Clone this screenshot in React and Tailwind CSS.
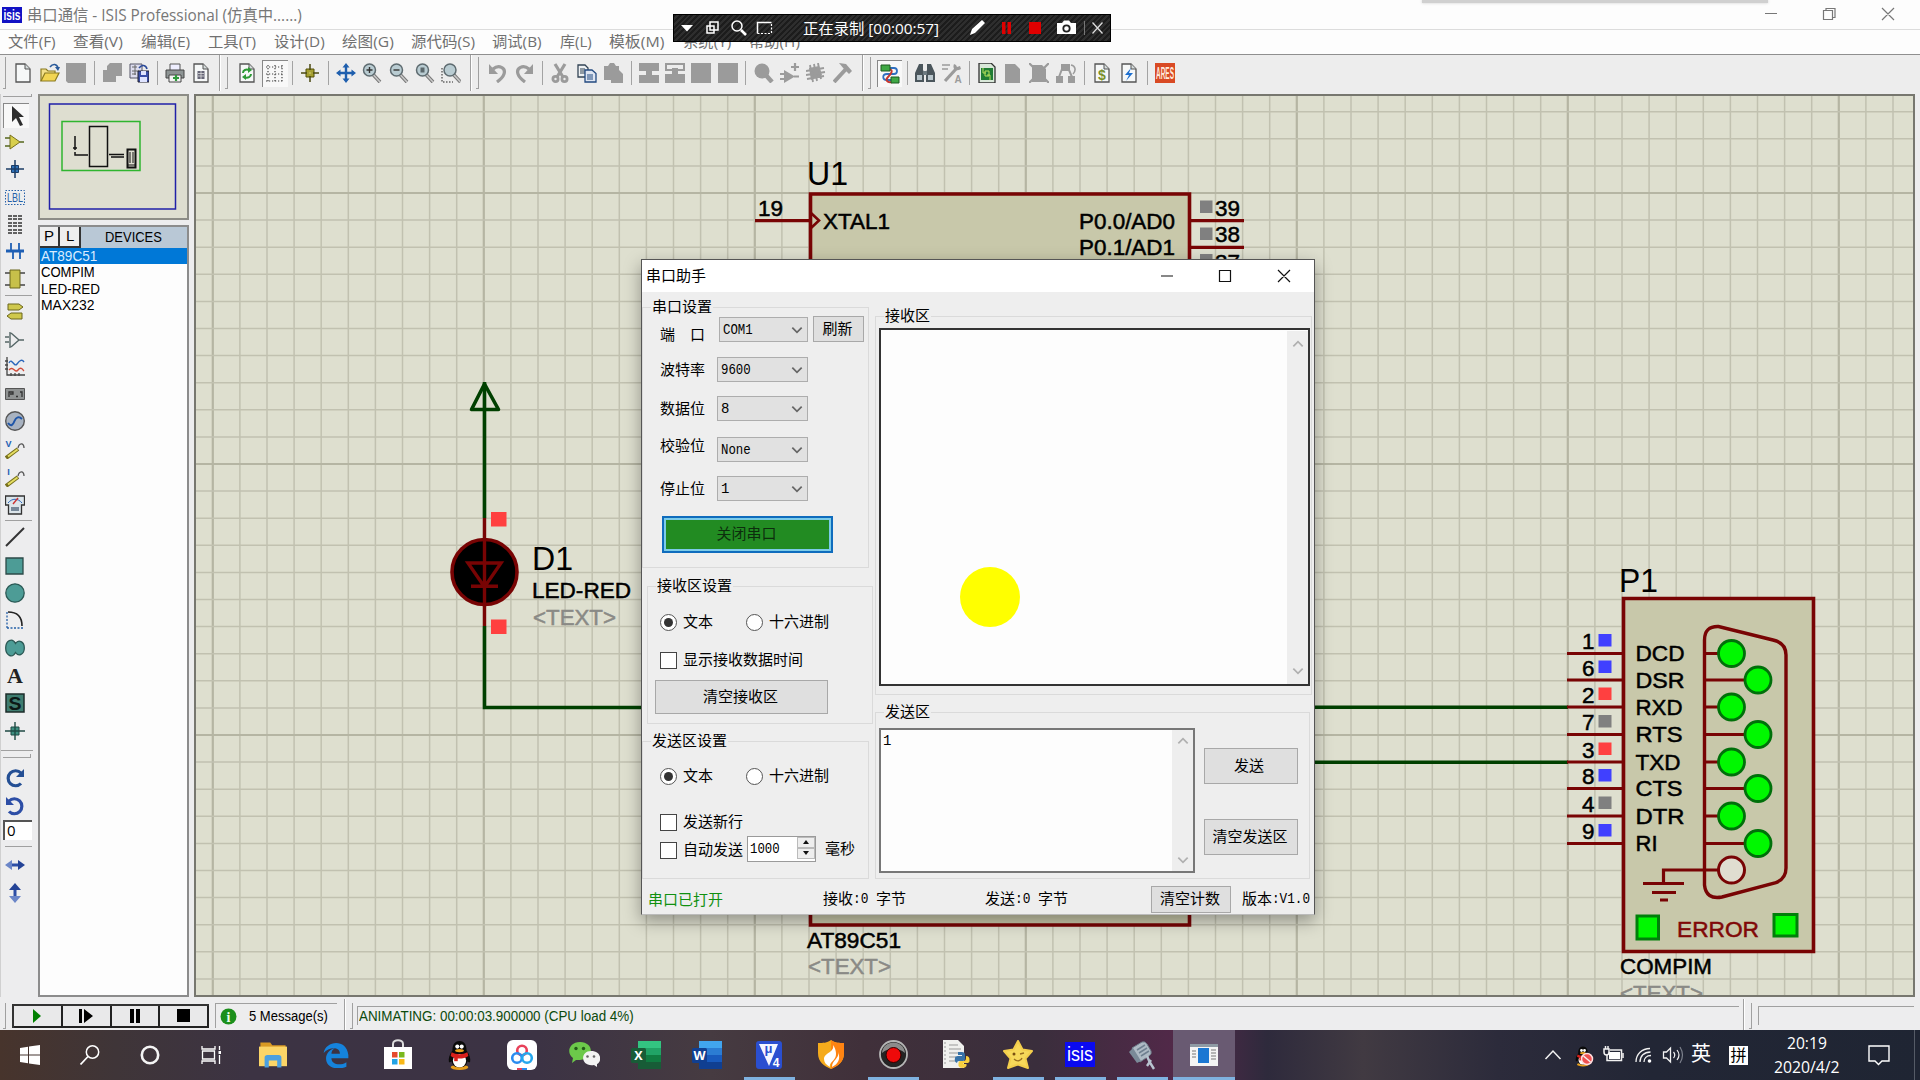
import React, { useLayoutEffect, useRef, useState } from "react";

/* Single line of text, condensed or widened to an exact width. */
function Fit({ w, children, className = "", dy = -1 }) {
  const ref = useRef(null);
  const [k, setK] = useState(1);
  useLayoutEffect(() => {
    const n = ref.current.offsetWidth;
    if (n) setK(w / n);
  }, [w, children]);
  return (
    <span className={"inline-block whitespace-nowrap text-left shrink-0 " + className} style={{ width: w }}>
      <span ref={ref} className="inline-block origin-left whitespace-pre" style={{ transform: `translateY(${dy}px) scaleX(${k})` }}>
        {children}
      </span>
    </span>
  );
}

const S = ({ children, s = 20, h, vb = "0 0 20 20", className = "" }) => (
  <svg width={s} height={h || s} viewBox={vb} fill="none" className={"shrink-0 " + className}>
    {children}
  </svg>
);
/* Lettering inside an icon. */
const L = ({ x, y, s, w, f, children, bold = true }) => (
  <text x={x} y={y} fontSize={s} fill={f} textAnchor="middle" fontWeight={bold ? 700 : 400} textLength={w} lengthAdjust="spacingAndGlyphs"
    className="[font-family:'Liberation_Sans',sans-serif]">{children}</text>
);

/* ---------- toolbar icons ---------- */
const G = "#9b9b9b";
const Page = ({ children }) => (
  <>
    <path d="M3 1h9l5 5v13H3z" fill="#f6f8f8" stroke="#555" strokeWidth="1.3" />
    <path d="M12 1v5h5" fill="#d5dcdc" stroke="#555" />
    {children}
  </>
);
const Lens = ({ children, dx = 0 }) => (
  <g transform={`translate(${dx} 0)`}>
    <path d="M11.5 12l6.5 7" stroke="#777" strokeWidth="3.6" />
    <path d="M11.5 12l6.5 7" stroke="#c9c9c9" strokeWidth="1.6" />
    <circle cx="7.5" cy="7" r="6" fill="#b9ccd2" stroke="#5e6b70" strokeWidth="1.5" />
    {children}
  </g>
);
const icons = {
  new: <Page />,
  open: (
    <>
      <path d="M1 18V6h5l2 2h7v3" fill="#f3e08a" stroke="#8a7a20" strokeWidth="1.2" />
      <path d="M1 18l4-8h14l-4 8z" fill="#f2d552" stroke="#8a7a20" strokeWidth="1.2" />
      <path d="M10 4c3-4 7-3 8 1" stroke="#2a5a9a" strokeWidth="1.6" />
      <path d="M15 4h5l-2 4z" fill="#2a5a9a" />
    </>
  ),
  block: <path d="M0 0h20v20H2l-2-2z" fill={G} />,
  solid: <path d="M0 0h20v20H0z" fill={G} />,
  import: <path d="M1 7h4V3l3-3h12v13h-6v6H1z" fill={G} />,
  export: (
    <>
      <path d="M1 1h12v14H1z" fill="#dde" stroke="#556" />
      <path d="M3 4h5M3 8h7M3 11h4M6 2v10" stroke="#666" />
      <path d="M9 8h11v11H9z" fill="#3b4fa8" stroke="#223" />
      <path d="M12 8h5v4h-5zM11 14h7v5h-7z" fill="#dfe4ff" />
      <path d="M10 5c3-4 7-3 8 1" stroke="#2a4a9a" strokeWidth="1.6" />
    </>
  ),
  print: (
    <>
      <path d="M5 1h10v7H5z" fill="#eef" stroke="#555" />
      <path d="M1 7h18v8H1z" fill="#8d9494" stroke="#444" />
      <path d="M4 12h12v7H4z" fill="#f4f4f4" stroke="#444" />
      <path d="M8 15h6M11 12v6" stroke="#2f9a3b" strokeWidth="2.2" />
    </>
  ),
  area: (
    <>
      <Page />
      <path d="M6.500 8h7v8h-7z" fill="#667" />
      <path d="M7 10.500h6M7 13h6M10 8v8" stroke="#ddd" strokeWidth=".8" />
    </>
  ),
  refresh: (
    <>
      <Page />
      <path d="M6 10c0-3 3-4 6-3M14 11c0 3-3 4-6 3.500" stroke="#2d9a35" strokeWidth="2" />
      <path d="M11 4l4 3-4 3zM9 17l-4-3 4-3z" fill="#2d9a35" />
    </>
  ),
  grid: (
    <g stroke="#222" strokeDasharray="1.2 1.8" strokeWidth="1.2">
      <path d="M1 3h18M1 10h18M1 17h18M3 1v18M10 1v18M17 1v18" strokeOpacity=".85" />
    </g>
  ),
  origin: (
    <>
      <path d="M6 6h8v8H6z" fill="#a5a02d" stroke="#55500a" />
      <path d="M10 1v18M1 10h18" stroke="#4a4810" strokeWidth="1.5" />
      <path d="M10 7v6M7 10h6" stroke="#e9e060" />
    </>
  ),
  pan: (
    <>
      <path d="M10 2v16M2 10h16" stroke="#1f5fae" strokeWidth="2.400" />
      <path d="M10 0l3.500 4.500h-7zM10 20l3.500-4.500h-7zM0 10l4.500-3.500v7zM20 10l-4.500-3.500v7z" fill="#1f5fae" />
    </>
  ),
  zin: <Lens><path d="M7.500 4v6M4.500 7h6" stroke="#333" strokeWidth="1.4" /></Lens>,
  zout: <Lens><path d="M4.500 7h6" stroke="#333" strokeWidth="1.4" /></Lens>,
  zall: <Lens><path d="M5.500 4.500h4v5h-4z" fill="#5b686c" /></Lens>,
  zarea: (
    <>
      <path d="M1 5v14h11" stroke="#222" strokeDasharray="1.500 1.500" />
      <Lens dx={1.5} />
    </>
  ),
  undo: (
    <>
      <path d="M5 6c6-5 13-1 11 5-1 3-3 5-7 8" stroke={G} strokeWidth="3.200" />
      <path d="M1 1v10h9z" fill={G} />
    </>
  ),
  redo: (
    <>
      <path d="M15 6C9 1 2 5 4 11c1 3 3 5 7 8" stroke={G} strokeWidth="3.200" />
      <path d="M19 1v10h-9z" fill={G} />
    </>
  ),
  cut: (
    <>
      <path d="M5 1l8 13M15 1L7 14" stroke={G} strokeWidth="3.200" />
      <circle cx="5.500" cy="16" r="2.600" stroke={G} strokeWidth="2.800" />
      <circle cx="14.500" cy="16" r="2.600" stroke={G} strokeWidth="2.800" />
    </>
  ),
  copy: (
    <>
      <path d="M1 2h7l3 3v9H1z" fill="#eef1f3" stroke="#345" strokeWidth="1.3" />
      <path d="M3 6h5M3 8h5M3 10h5" stroke="#345" />
      <path d="M8 7h7l4 3.500V19H8z" fill="#dfe6f2" stroke="#234a80" strokeWidth="1.3" />
      <path d="M10 12h6M10 14h6M10 16h6" stroke="#234a80" />
    </>
  ),
  paste: <path d="M1 3h4l2-3h4l2 3h3v4l4 4v9H8v-3H1z" fill={G} />,
  b1: <path d="M0 0h20v8h-7v4h7v8H0v-8h7V8H0z" fill={G} />,
  b2: (
    <>
      <path d="M1 1h18v6H1z" stroke={G} strokeWidth="2" />
      <path d="M7 5h6v6h7v9H0v-9h7z" fill={G} />
    </>
  ),
  pick: (
    <>
      <path d="M10 10l8 9" stroke={G} strokeWidth="4.500" />
      <circle cx="8" cy="8" r="7.500" fill={G} />
    </>
  ),
  gate: (
    <>
      <path d="M4 7l11 6.500L4 20z" fill={G} />
      <path d="M0 11h5M0 16h5M14 13.500h5M15 0v8M11 4h8" stroke={G} strokeWidth="2.200" />
    </>
  ),
  pack: (
    <>
      <path d="M3 5l10-2 3 9-11 5z" fill={G} />
      <path d="M4 2l3 17M8 1l3 17M12 0l3 16M0 8l18-3M0 12l19-3M1 16l17-3" stroke={G} strokeWidth="1.900" />
    </>
  ),
  hammer: (
    <>
      <path d="M1 19L13 6" stroke={G} strokeWidth="4" />
      <path d="M6 0l7 1 6 7-3 3-5-5z" fill={G} />
    </>
  ),
  wire: (
    <>
      <path d="M8 4h6c4 0 4 6 0 6H7c-5 0-5 6 0 6h5" stroke="#2f6fc0" strokeWidth="1.800" />
      <path d="M9 5c5 1 2 5-1 8s-1 6 4 5" stroke="#c7362d" strokeWidth="2" />
      <path d="M1 1h9v6H1zM11 13h8v6h-8z" fill="#3fa845" stroke="#1c5b20" />
    </>
  ),
  bin: (
    <>
      <path d="M4 1h4v6l1 2v10H0v-9zM16 1h-4v6l-1 2v10h9v-9z" fill="#4b565c" />
      <path d="M8 8h4v4H8z" fill="#6d7a80" />
      <path d="M2 12h5v5H2zM13 12h5v5h-5z" fill="#b9c6cc" />
    </>
  ),
  tool: (
    <>
      <path d="M3 18L14 6" stroke={G} strokeWidth="3.200" />
      <path d="M12 1c-2 5 2 8 7 5l-1-3-3 1-1-2z" fill={G} />
      <path d="M0 2h8M0 6h6" stroke={G} strokeWidth="1.600" />
      <L x={16} y={20} s={10} f={G}>A</L>
    </>
  ),
  design: (
    <>
      <path d="M2 0h12l4 4v16H2z" fill="#d9e8d9" stroke="#333" strokeWidth="1.300" />
      <path d="M4 5h12v12H4z" fill="#207c34" />
      <path d="M6 5v5h3M13 17v-5h-3M8 8h4v5H8z" stroke="#b7e05a" />
    </>
  ),
  sheet: <path d="M2 1h10l5 5v14H2z" fill={G} />,
  remove: (
    <>
      <path d="M3 2h10l4 4v13H3z" fill={G} />
      <path d="M0 0l20 20M20 0L0 20" stroke={G} strokeWidth="2.200" />
    </>
  ),
  exit: (
    <>
      <path d="M5 1h9v7H5z" fill={G} />
      <path d="M6 6L3 14M13 7l3 7" stroke={G} strokeWidth="2" />
      <path d="M0 13h7v7H0zM12 13h7v7h-7z" fill={G} />
      <path d="M15 2c5 1 5 6 2 9" stroke={G} strokeWidth="1.600" />
    </>
  ),
  dollar: <Page><L x={10} y={17} s={14} f="#79902b">$</L></Page>,
  bolt: <Page><path d="M12 5l-6 7h4l-3 6 7-8h-4z" fill="#1d6fd0" /></Page>,
  ares: (
    <>
      <path d="M0 0h20v20H0z" fill="#d94a24" />
      <L x={10} y={16} s={16} w={18} f="#ffe9dc">ARES</L>
    </>
  ),
};

const toolbar = [
  ["grip", 9], ["new", 27], ["open", 27], ["block", 26], ["sep", 10], ["import", 26], ["export", 27], ["sep", 10],
  ["print", 26], ["area", 26], ["end", 19], ["refresh", 28], ["grid", 27, 1], ["sep", 9], ["origin", 26], ["sep", 10],
  ["pan", 26], ["zin", 26], ["zout", 27], ["zall", 26], ["zarea", 26], ["end", 21], ["undo", 26], ["redo", 26],
  ["sep", 10], ["cut", 26], ["copy", 27], ["paste", 26], ["sep", 10], ["b1", 25], ["b2", 27], ["solid", 26],
  ["solid", 27], ["sep", 9], ["pick", 27], ["gate", 26], ["pack", 26], ["hammer", 27], ["end", 21], ["wire", 25, 1],
  ["sep", 10], ["bin", 26], ["tool", 27], ["sep", 9], ["design", 26], ["sheet", 26], ["remove", 26], ["exit", 27],
  ["sep", 10], ["dollar", 26], ["bolt", 27], ["sep", 10], ["ares", 26],
];

function Toolbar() {
  return (
    <div className="flex h-[39px] items-stretch border-t border-[#8f8f8f] bg-[#ededed] pb-0.5">
      {toolbar.map(([k, w, on], i) => (
        <div key={i} className="flex shrink-0 items-center justify-center" style={{ width: w }}>
          {k === "sep" ? (
            <div className="h-6 w-px bg-[#a3a3a3]" />
          ) : k === "grip" ? (
            <div className="h-8 w-[3px] border-b border-r border-[#a0a0a0]" />
          ) : k === "end" ? (
            <div className="flex items-center gap-1">
              <div className="h-9 w-0.5 border-l border-[#a0a0a0] bg-white" />
              <div className="h-8 w-[3px] border-b border-r border-[#a0a0a0]" />
            </div>
          ) : (
            <div className={on ? "flex h-[27px] w-[26px] items-center justify-center border-l border-t border-[#888] bg-[#f8f8f8]" : ""}>
              <S>{icons[k]}</S>
            </div>
          )}
        </div>
      ))}
    </div>
  );
}

/* ---------- left mode bar ---------- */
const Teal = "#4d9c96";
const Probe = ({ l }) => (
  <>
    <L x={3.5} y={8} s={9} f="#1e5fb4">{l}</L>
    <path d="M1 19l12-9" stroke="#77701c" strokeWidth="4" />
    <path d="M3 17.500l9.500-7" stroke="#e6de62" strokeWidth="2" />
    <path d="M13 9c1-5 6-6 6 0" stroke="#555" strokeWidth="1.300" />
  </>
);
const modes = {
  pointer: <path d="M5 0v16l4-4 4 8 3-1-4-8h5z" fill="#2c2c2c" />,
  comp: (
    <>
      <path d="M5 3l10 7-10 7z" fill="#d8cf4c" stroke="#77701c" />
      <path d="M0 6h5M0 14h5M15 10h4" stroke="#55671c" strokeWidth="1.500" />
    </>
  ),
  dot: (
    <>
      <path d="M6.500 6.500h7v7h-7z" fill="#2f72b8" stroke="#1b3c66" />
      <path d="M10 1v18M1 10h18" stroke="#1b3c66" strokeWidth="1.500" />
    </>
  ),
  lbl: (
    <>
      <path d="M.5 3.500h19v14H.5z" stroke="#2560a8" strokeDasharray="1.500 1.500" />
      <L x={10} y={15} s={12.5} w={16} f="#2560a8" bold={false}>LBL</L>
    </>
  ),
  script: <path d="M3 2h14M3 5h14M3 9h14M3 12h14M3 16h14M3 19h14" stroke="#333" strokeWidth="1.400" strokeDasharray="4 1" />,
  bus: <><path d="M1 10h18" stroke="#1e5fb4" strokeWidth="3" /><path d="M6 2v8M14 2v8M8 10v8M15 10v8" stroke="#1e5fb4" strokeWidth="1.800" /></>,
  sub: (
    <>
      <path d="M0 4h20M0 16h20" stroke="#444" strokeWidth="1.300" />
      <path d="M5 1h10v18H5z" fill="#c7c04a" stroke="#6b661c" />
    </>
  ),
  term: <path d="M3 2h11l4 3-4 3H3zM17 11H6l-4 3 4 3h11z" fill="#cfc84c" stroke="#6b661c" />,
  pin: <path d="M5 2v16M6 3l8 7-8 7M0 7h4M0 12h4M14 10h5" stroke="#566" strokeWidth="1.400" />,
  graph: (
    <>
      <path d="M2 0v18h18M0 4h3M0 8h3M0 12h3M6 16v3M10 16v3M14 16v3" stroke="#444" strokeWidth="1.300" />
      <path d="M4 6c3-6 5 5 8 1s5-5 7-2" stroke="#2a66bb" strokeWidth="1.400" />
      <path d="M4 13c4-5 6 4 9 0s5 0 6 1" stroke="#d04b3a" strokeWidth="1.400" />
    </>
  ),
  tape: (
    <>
      <path d="M.5 4.500h19v11H.5z" fill="#8f9292" stroke="#555" />
      <path d="M4 13V8h4v2H5M11 12.500h2M15 8h2v5" stroke="#333" strokeWidth="1.300" />
    </>
  ),
  gen: (
    <>
      <circle cx="10" cy="10" r="9.300" fill="#a8b2c0" stroke="#555" strokeWidth="1.400" />
      <path d="M3 12c3 4 5 2 6.500-2S14 5 17 8" stroke="#1e55a8" strokeWidth="2" />
    </>
  ),
  vp: <Probe l="V" />,
  ip: <Probe l="I" />,
  meter: (
    <>
      <path d="M.5 1h19v9h-3v9h-13v-9h-3z" fill="#dce5ea" stroke="#333" strokeWidth="1.300" />
      <path d="M3 8c4-5 10-5 14 0" stroke="#2a66bb" />
      <path d="M8 9l5-6" stroke="#c33" strokeWidth="1.400" />
      <path d="M6 12h8v4H6z" fill="#789" />
    </>
  ),
  line: <path d="M1 19L19 1" stroke="#333" strokeWidth="2" />,
  rect: <path d="M1 2h17v16H1z" fill={Teal} stroke="#2c4a48" strokeWidth="1.300" />,
  circ: <circle cx="10" cy="10" r="9.200" fill={Teal} stroke="#2c5a56" strokeWidth="1.300" />,
  arc: (
    <>
      <path d="M2 18V2M2 18h16" stroke="#2560a8" strokeWidth="1.300" strokeDasharray="2 1.500" />
      <path d="M3 2c9 0 14 5 14 14" stroke="#222" strokeWidth="1.600" />
    </>
  ),
  path: <path d="M10.500 5.500C7-1 .7 3 .7 10s6.300 11 9.800 4.500c3 4.500 8.800 2 8.800-4.500s-5.800-9-8.800-4.500z" fill={Teal} stroke="#2c5a56" strokeWidth="1.300" />,
  sym: (
    <>
      <path d="M1 1h18v18H1z" fill="#3f7d70" stroke="#1d2d2a" strokeWidth="1.500" />
      <L x={10} y={16.5} s={18} w={13} f="#0c1816">S</L>
    </>
  ),
  mark: (
    <>
      <path d="M6 6h8v8H6z" fill="#3d8f80" stroke="#1f4a44" />
      <path d="M10 1v18M0 10h20" stroke="#1f4a44" strokeWidth="1.400" />
    </>
  ),
  cw: <><path d="M16 5A7.500 7.500 0 1 0 16 15.500" stroke="#244f94" strokeWidth="3.200" /><path d="M19 1v8h-8z" fill="#244f94" /></>,
  ccw: <><path d="M4 5A7.500 7.500 0 1 1 4 15.500" stroke="#2d4ea6" strokeWidth="3.200" /><path d="M1 1v8h8z" fill="#2d4ea6" /></>,
  fh: <><path d="M5 10h10" stroke="#2d4ea6" strokeWidth="3" /><path d="M0 10l7-5v10z" fill="#6b86c8" /><path d="M20 10l-7-5v10z" fill="#244396" /></>,
  fv: <><path d="M10 5v10" stroke="#2d4ea6" strokeWidth="3" /><path d="M10 0l6 7H4z" fill="#244396" /><path d="M10 20l6-7H4z" fill="#6b86c8" /></>,
};
const modeRows = [
  ["comp", 26], ["dot", 28], ["lbl", 27], ["script", 27], ["bus", 28], ["sub", 28], ["sep", 4],
  ["term", 29], ["pin", 27], ["graph", 27], ["tape", 27], ["gen", 28], ["vp", 28], ["ip", 27], ["meter", 29],
  ["sep", 3], ["line", 30], ["rect", 27], ["circ", 27], ["arc", 28], ["path", 28], ["text", 27], ["sym", 28], ["mark", 27],
];
function ModeIcon({ k, h }) {
  if (k === "sep")
    return <div className="flex shrink-0 items-center" style={{ height: h }}><div className="ml-1 h-px w-[27px] bg-[#a0a0a0]" /></div>;
  return (
    <div className="flex shrink-0 items-center pl-1" style={{ height: h }}>
      {k === "text" ? (
        <span className="w-5 text-center text-[22px] font-bold leading-none text-[#222] [font-family:'Liberation_Serif',serif]">A</span>
      ) : (
        <S>{modes[k]}</S>
      )}
    </div>
  );
}
function ModeBar() {
  return (
    <div className="flex w-[38px] shrink-0 flex-col border-l border-[#d0d0d0]">
      <div className="ml-0.5 h-[3px] w-[29px] border-b border-r border-[#a0a0a0]" />
      <div className="mb-px ml-0.5 mt-1.5 flex h-[25px] w-[26px] items-center justify-center border-l border-t border-[#888] bg-[#f8f8f8]">
        <S>{modes.pointer}</S>
      </div>
      {modeRows.map(([k, h], i) => <ModeIcon key={i} k={k} h={h} />)}
      <div className="mt-1.5 h-px w-8 bg-[#a0a0a0]" />
      <div className="ml-0.5 mt-[3px] h-1 w-7 border-b border-r border-[#a0a0a0]" />
      <div className="h-1.5" />
      <ModeIcon k="cw" h={28} />
      <ModeIcon k="ccw" h={27} />
      <div className="ml-0.5 mt-px h-5 w-[29px] border-l-2 border-t-2 border-[#555] bg-white pl-0.5 text-[15px] leading-[17px]">0</div>
      <div className="ml-1 mt-1.5 h-px w-[27px] bg-[#a0a0a0]" />
      <div className="h-1" />
      <ModeIcon k="fh" h={28} />
      <ModeIcon k="fv" h={28} />
    </div>
  );
}

/* ---------- side panel ---------- */
function SidePanel() {
  return (
    <div className="flex w-[151px] shrink-0 flex-col">
      <div className="h-[126px] border-2 border-[#8c8c86] bg-[#deded0]">
        <svg width="147" height="122" viewBox="41 97 147 122" fill="none">
          <path d="M50.500 105h126v105h-126z" stroke="#2020a8" strokeWidth="1.500" />
          <path d="M63 122.500h78v49H63z" stroke="#2fb52f" strokeWidth="1.500" />
          <path d="M90.500 127.500h18v40h-18z" stroke="#111" strokeWidth="1.500" />
          <path d="M76 137v14M76 153v3h13M74 149h4M110 155.500h15M112 158h13" stroke="#111" strokeWidth="1.500" />
          <path d="M128.500 150.500h8v18h-8z" stroke="#111" strokeWidth="2" />
          <path d="M131 153v11M134 153v11M129 166h7" stroke="#111" />
        </svg>
      </div>
      <div className="mt-[5px] flex flex-1 flex-col border-2 border-[#8c8c8c] bg-[#fdfdfd]">
        <div className="flex h-[21px] shrink-0 bg-[#b9c8d6] text-[15px] leading-5 [font-family:'Liberation_Sans',sans-serif]">
          <div className="w-5 border-b-2 border-r-2 border-[#333] bg-[#eee] pl-1 leading-[18px]">P</div>
          <div className="w-[21px] border-b-2 border-r-2 border-[#333] bg-[#eee] pl-1.5 leading-[18px]">L</div>
          <Fit w={57} dy={0} className="ml-6">DEVICES</Fit>
        </div>
        <div className="text-[15.5px] leading-[16.300px] [font-family:'Liberation_Sans',sans-serif]">
          <div className="bg-[#0078d7] pl-[1px] text-[#d8ecff]"><Fit dy={0} w={56}>AT89C51</Fit></div>
          <div className="pl-[1px]"><Fit dy={0} w={54}>COMPIM</Fit></div>
          <div className="pl-[1px]"><Fit dy={0} w={59}>LED-RED</Fit></div>
          <div className="pl-[1px]"><Fit dy={0} w={53}>MAX232</Fit></div>
        </div>
      </div>
    </div>
  );
}

/* ---------- schematic ---------- */
const T = ({ x, y, w, s = 22, f = "#000", b, children }) => (
  <text x={x} y={y - 0.5} fontSize={s} fill={f} textLength={w} lengthAdjust="spacingAndGlyphs" stroke={f} strokeWidth={b ? 0.5 : 0}
    className="[font-family:'Liberation_Sans',sans-serif]">{children}</text>
);
const pins = [
  ["1", "DCD", 653.5, "#4040ff", 47], ["6", "DSR", 680, "#4040ff", 47], ["2", "RXD", 707, "#ff4040", 45], ["7", "RTS", 734.5, "#808080", 45],
  ["3", "TXD", 762, "#ff4040", 43], ["8", "CTS", 788.5, "#4040ff", 45], ["4", "DTR", 816, "#808080", 47], ["9", "RI", 843.5, "#4040ff", 20],
];
const R = "#780404";
const W = "#004000";
function Schematic() {
  const vs = [], hs = [];
  for (let i = 0; i < 63; i++) vs.push([212.8 + i * 27.1, i % 10 === 0]);
  for (let i = -3; i < 30; i++) hs.push([193 + i * 27.1, i % 10 === 0]);
  return (
    <svg width="1717" height="900" viewBox="196 96 1717 900" fill="none">
      {vs.map(([x, m]) => <path key={x} d={`M${x} 90V1000`} stroke={m ? "#b5b5a3" : "#c1c1b0"} strokeWidth={m ? 2.2 : 1.5} />)}
      {hs.map(([y, m]) => <path key={y} d={`M190 ${y}H1920`} stroke={m ? "#b5b5a3" : "#c1c1b0"} strokeWidth={m ? 2.2 : 1.5} />)}

      <T x={807} y={185} w={41} s={34}>U1</T>
      <path d="M810.500 194h379v731h-379z" fill="#c8c8aa" stroke={R} strokeWidth="3.600" />
      <path d="M755 220.700h55M1191 220.700h53M1191 247.300h53" stroke={R} strokeWidth="3.200" />
      <path d="M811 213l8 7.500-8 7.500" stroke={R} strokeWidth="2.600" />
      <T x={758} y={216} w={25} b>19</T>
      <T x={823} y={229} w={67} b>XTAL1</T>
      <T x={1079} y={229} w={96} b>P0.0/AD0</T>
      <T x={1079} y={255} w={96} b>P0.1/AD1</T>
      <T x={1215} y={216} w={25} b>39</T>
      <T x={1215} y={242.5} w={25} b>38</T>
      <T x={1215} y={270} w={25} b>37</T>
      <path d="M1200 200.500h12.500v12.500H1200zM1200 227.500h12.500v12.500H1200zM1200 254h12.500v12.500H1200z" fill="#808080" />
      <T x={807} y={948} w={94} b>AT89C51</T>
      <T x={808} y={974.5} w={83} f="#8a8a86" b>&lt;TEXT&gt;</T>

      <path d="M484.500 382v136M484.500 626v81.500H650" stroke={W} strokeWidth="3.600" />
      <path d="M484.500 384l-13 25.500h27z" stroke={W} strokeWidth="3.600" strokeLinejoin="round" />
      <circle cx="484.500" cy="572" r="32.500" fill="#000" stroke={R} strokeWidth="3.600" />
      <path d="M484.500 518v108M468 563h33l-16.500 24zM471 586.300h27" stroke={R} strokeWidth="3.400" />
      <path d="M491 512h15.500v14.500H491zM491 619.500h15.500v14.500H491z" fill="#ff4040" />
      <T x={532} y={570} w={41} s={34}>D1</T>
      <T x={532} y={598} w={99} b>LED-RED</T>
      <T x={533} y={625} w={83} f="#8a8a86" b>&lt;TEXT&gt;</T>

      <path d="M1300 707.300h268M1300 762.300h268" stroke={W} strokeWidth="3.400" />
      <T x={1619} y={592} w={39} s={34}>P1</T>
      <path d="M1623.500 598.500h190v353h-190z" fill="#c8c8aa" stroke={R} strokeWidth="3.600" />
      <path d="M1704.500 640q0-14 14-13.500L1773 640q13 3 13 15v213q0 11-11 15l-53 14q-16 3-17.500-12z" stroke={R} strokeWidth="3.400" />
      {pins.map(([n, l, y, c, w], i) => {
        const cx = i % 2 ? 1758 : 1731.5;
        return (
          <g key={n}>
            <path d={`M1567 ${y}h56M1705 ${y}H${cx}`} stroke={R} strokeWidth="3.200" />
            <T x={1582} y={y - 4} w={12.5} b>{n}</T>
            <rect x="1598.500" y={y - 19.5} width="13" height="12.500" fill={c} />
            <T x={1635.5} y={y + 8} w={w + 2} b>{l}</T>
            <circle cx={cx} cy={y} r="13" fill="#00f800" stroke="#00700a" strokeWidth="2.800" />
          </g>
        );
      })}
      <path d="M1720 870h-56.500v13M1643 883.500h41M1652 892.500h24M1660 900h8" stroke={R} strokeWidth="3.200" />
      <circle cx="1731.500" cy="870" r="13" fill="#e0ddd0" stroke={R} strokeWidth="3" />
      <path d="M1637 916h21.500v23H1637zM1774 914.500h23v21.500h-23z" fill="#00f800" stroke="#00800a" strokeWidth="3" />
      <T x={1677} y={937} w={82} f="#800808" b>ERROR</T>
      <T x={1620} y={974.5} w={92} b>COMPIM</T>
      <T x={1620} y={1001} w={83} f="#8a8a86" b>&lt;TEXT&gt;</T>
    </svg>
  );
}

/* ---------- serial assistant window ---------- */
const Chev = ({ up, c = "#666" }) => <S s={14} vb="0 0 12 12"><path d={up ? "M2 8l4-4 4 4" : "M2 4l4 4 4-4"} stroke={c} strokeWidth="1.500" /></S>;
const Mono = ({ w, dy = 0, children }) => <Fit w={w} dy={dy} className="text-[14px] [font-family:'Liberation_Mono',monospace]">{children}</Fit>;
const Btn = ({ className, w, children }) => (
  <div className={"flex shrink-0 items-center justify-center border border-[#a8a8a8] bg-[#dfdfdf] " + className}><Fit w={w}>{children}</Fit></div>
);
const Group = ({ className, title, tw, tc = "ml-2", children }) => (
  <div className={"border border-[#dadada] " + className}>
    <div className={"-mt-[11px] h-5 w-fit bg-[#eeeeee] px-px leading-5 " + tc}><Fit w={tw}>{title}</Fit></div>
    {children}
  </div>
);
const Field = ({ label, value, vw, className = "", lc = "", first }) => (
  <div className={"flex h-[25px] pl-[17px] " + className}>
    <div className={"shrink-0 leading-[25px] " + lc + (first ? " w-[59px]" : " w-[57px]")}>
      {first ? <span className="flex w-[45px] justify-between"><span>端</span><span>口</span></span> : <Fit w={45}>{label}</Fit>}
    </div>
    <div className={"flex shrink-0 items-center justify-between border border-[#adadad] bg-[#e1e1e1] pl-[3px] pr-[3px] " + (first ? "w-[89px]" : "w-[91px]")}>
      <Mono w={vw} dy={1}>{value}</Mono><Chev />
    </div>
    {first && <Btn className="-mt-px ml-[5px] h-[26px] w-[51px] pr-0.5" w={30}>刷新</Btn>}
  </div>
);
const Radio = ({ on }) => (
  <div className="flex h-[17px] w-[17px] shrink-0 items-center justify-center rounded-full border-[1.500px] border-[#555] bg-white">
    {on && <div className="h-[9px] w-[9px] rounded-full bg-[#333]" />}
  </div>
);
const Check = () => <div className="h-[17px] w-[17px] shrink-0 border-[1.500px] border-[#444] bg-white" />;
const Radios = ({ className }) => (
  <div className={"flex items-center " + className}>
    <Radio on /><Fit w={30} className="ml-1.5">文本</Fit>
    <div className="w-[33px]" />
    <Radio /><Fit w={60} className="ml-1.5">十六进制</Fit>
  </div>
);
const Scroll = ({ className }) => (
  <div className={"flex shrink-0 flex-col items-center justify-between bg-[#eeeeee] " + className}><Chev up c="#b0b0b0" /><Chev c="#b0b0b0" /></div>
);
const Count = ({ label, className }) => (
  <div className={"flex items-center " + className}><Fit w={30}>{label}</Fit><Mono w={23}>{":0 "}</Mono><Fit w={30}>字节</Fit></div>
);

function SerialWindow() {
  return (
    <div className="absolute left-[641px] top-[259px] flex h-[656px] w-[674px] flex-col border border-[#555] border-b-[#bbb] bg-[#eeeeee] text-[15px] text-black shadow-[0_6px_16px_rgba(0,0,0,0.35)] [font-family:'Noto_Sans_CJK_SC',sans-serif]">
      <div className="flex h-8 shrink-0 items-center bg-white pl-1">
        <Fit w={60}>串口助手</Fit>
        <div className="flex-1" />
        <svg width="154" height="32" viewBox="1160 260 154 32" fill="none" stroke="#111" strokeWidth="1.200">
          <path d="M1161 276h12M1219.500 270.500h11v11h-11zM1278 270l12 12M1290 270l-12 12" />
        </svg>
      </div>
      <div className="flex h-[587px] shrink-0">
        <div className="flex w-[233px] shrink-0 flex-col">
          <Group className="mt-[15px] h-[261px] w-[227px]" title="串口设置" tw={60}>
            <Field first value="COM1" vw={30} lc="mt-[4px]" />
            <Field label="波特率" value="9600" vw={30} className="mt-[15px]" />
            <Field label="数据位" value="8" vw={8} className="mt-[14px]" />
            <Field label="校验位" value="None" vw={30} className="mt-4" lc="-mt-1" />
            <Field label="停止位" value="1" vw={8} className="mt-[14px]" />
            <div className="ml-[19px] mt-[15px] flex h-[37px] w-[171px] items-center justify-center border-2 border-[#0f6cbd] bg-[#228b22] pr-0.5 text-[#0d2e0d] shadow-[inset_0_0_0_2px_#7ccbe8]"><Fit w={60}>关闭串口</Fit></div>
          </Group>
          <Group className="ml-[5px] mt-[18px] h-[138px] w-[226px]" title="接收区设置" tw={75}>
            <Radios className="ml-[12px] mt-[16px] h-5" />
            <div className="ml-[12px] mt-[18px] flex h-5 items-center"><Check /><Fit w={120} className="ml-1.5">显示接收数据时间</Fit></div>
            <Btn className="ml-[7px] mt-[10px] h-[34px] w-[173px] pr-0.5" w={75}>清空接收区</Btn>
          </Group>
          <Group className="mt-[17px] h-[138px] w-[227px]" title="发送区设置" tw={75}>
            <Radios className="ml-[17px] mt-[15px] h-5" />
            <div className="ml-[17px] mt-[26px] flex h-5 items-center"><Check /><Fit w={60} className="ml-1.5">发送新行</Fit></div>
            <div className="ml-[17px] mt-[5px] flex h-[27px] items-center">
              <Check /><Fit w={60} className="ml-1.5">自动发送</Fit>
              <div className="mb-1 ml-1 flex h-[26px] w-[69px] justify-between border border-[#9a9a9a] bg-white pl-0.5">
                <div className="leading-[19px]"><Mono w={30}>1000</Mono></div>
                <div className="flex h-[22px] w-[18px] flex-col">
                  {[0, 1].map((i) => (
                    <div key={i} className="flex flex-1 items-center justify-center border border-[#bbb] bg-[#eee]">
                      <S s={8} h={6} vb="0 0 8 6"><path d={i ? "M1 1h6L4 5z" : "M1 5h6L4 1z"} fill="#111" /></S>
                    </div>
                  ))}
                </div>
              </div>
              <Fit w={30} dy={-2} className="ml-[9px]">毫秒</Fit>
            </div>
          </Group>
        </div>
        <div className="flex flex-1 flex-col">
          <Group className="mt-6 h-[379px] w-[437px]" title="接收区" tw={45}>
            <div className="ml-[3px] mt-0.5 flex h-[358px] w-[431px] justify-between border-2 border-[#333] bg-[#fdfdfd]">
              <div className="pl-[79px] pt-[237px]"><div className="h-[60px] w-[60px] rounded-full bg-[#ffff00]" /></div>
              <Scroll className="mt-px w-[21px] py-1.5" />
            </div>
          </Group>
          <Group className="mt-[17px] h-[167px] w-[435px]" title="发送区" tw={45}>
            <div className="ml-[3px] mt-[6px] flex">
              <div className="flex h-[145px] w-[316px] justify-between border-2 border-[#777] bg-[#fdfdfd]">
                <div className="pl-0.5 leading-5"><Mono w={8} dy={-1}>1</Mono></div>
                <Scroll className="w-[21px] py-1" />
              </div>
              <div className="ml-[9px] mt-5 flex flex-col gap-[35px]">
                <Btn className="h-9 w-[94px] pr-1" w={30}>发送</Btn>
                <Btn className="h-9 w-[94px] pr-0.5" w={75}>清空发送区</Btn>
              </div>
            </div>
          </Group>
        </div>
      </div>
      <div className="flex flex-1 items-center pl-1.5 pt-1.5">
        <Fit w={75} dy={0} className="text-[#109010]">串口已打开</Fit>
        <Count className="ml-[100px]" label="接收" />
        <Count className="ml-[79px]" label="发送" />
        <Btn className="ml-[83px] h-[27px] w-[80px] pr-0.5" w={60}>清空计数</Btn>
        <Fit w={30} className="ml-[11px]">版本</Fit><Mono w={38}>:V1.0</Mono>
      </div>
    </div>
  );
}

/* ---------- recorder overlay ---------- */
function Recorder() {
  return (
    <div className="absolute left-[673px] top-[14px] flex h-7 w-[438px] items-center border border-black bg-[repeating-linear-gradient(135deg,#1c1c1c_0_2px,#2e2e2e_2px_4px)] text-[15px] text-white">
      <svg width="123" height="26" viewBox="674 15 123 26" fill="none" stroke="#fff" strokeWidth="1.500" className="shrink-0">
        <path d="M681 25h12l-6 6.500z" fill="#fff" stroke="none" />
        <path d="M710 22h8v8h-8zM707 26h7v7h-7z" />
        <circle cx="737" cy="26" r="5" /><path d="M741 30l5 5" strokeWidth="2.600" />
        <path d="M757.500 33.500v-11h14" /><path d="M757.500 33.500h14M771.500 24v10" strokeDasharray="2 1.500" strokeWidth="1.200" />
      </svg>
      <Fit w={136} dy={0} className="ml-1.5">正在录制 [00:00:57]</Fit>
      <svg width="170" height="26" viewBox="938 15 170 26" fill="none" className="shrink-0">
        <path d="M969 35l2-6 10-9 3 3-10 10z" fill="#fff" />
        <path d="M1001 22h3.500v12h-3.500zM1006.500 22h3.500v12h-3.500zM1028 22h12v12h-12z" fill="#e00000" />
        <path d="M1056 23h5l2-2.500h5l2 2.500h5v11h-19z" fill="#fff" /><circle cx="1065.500" cy="28.500" r="3.200" stroke="#222" strokeWidth="1.800" />
        <path d="M1083.500 21v14" stroke="#777" /><path d="M1091.500 22.500l10 11M1101.500 22.500l-10 11" stroke="#ddd" strokeWidth="1.300" />
      </svg>
    </div>
  );
}

/* ---------- bottom bar ---------- */
function StatusBar() {
  const btn = "flex flex-1 items-center justify-center border-b-2 border-r-2 border-[#222] border-l-white border-t-white bg-[#e9e9ea]";
  return (
    <div className="flex h-[33px] shrink-0 items-center bg-[#ededee] pt-1 [font-family:'Liberation_Sans',sans-serif]">
      <div className="ml-[3px] h-[26px] w-[3px] border-b border-r border-[#a0a0a0]" />
      <div className="ml-1.5 flex h-6 w-[197px] border-2 border-b-0 border-r-0 border-[#333]">
        <div className={btn}><S s={14} vb="0 0 14 14"><path d="M3 0l8 7-8 7z" fill="#008000" /></S></div>
        <div className={btn}><S s={14} vb="0 0 14 14"><path d="M0 0h3v14H0zM5 0l9 7-9 7z" fill="#000" /></S></div>
        <div className={btn}><S s={14} vb="0 0 14 14"><path d="M2 0h4v14H2zM8 0h4v14H8z" fill="#000" /></S></div>
        <div className={btn}><S s={13} vb="0 0 13 13"><path d="M0 0h13v13H0z" fill="#000" /></S></div>
      </div>
      <div className="ml-1.5 flex h-[25px] w-[122px] items-center border-l border-t border-[#a0a0a0] pl-1 text-[15.5px]">
        <S s={17} vb="0 0 17 17"><circle cx="8.500" cy="8.500" r="8" fill="#1b8f1b" /><text x="8.500" y="13.500" fontSize="14" fontWeight="700" textAnchor="middle" fill="#e9ffe9" className="[font-family:'Liberation_Serif',serif]">i</text></S>
        <Fit w={79} dy={0} className="ml-3">5 Message(s)</Fit>
      </div>
      <div className="ml-[7px] h-[33px] w-0.5 border-l border-[#a0a0a0] bg-white" />
      <div className="ml-1 h-[26px] w-[3px] border-b border-r border-[#a0a0a0]" />
      <div className="ml-1 flex h-[19px] w-[1382px] items-center border-l border-t border-[#a0a0a0] pl-px text-[15.5px] text-[#0c4a0c]">
        <Fit w={275} dy={0}>ANIMATING: 00:00:03.900000 (CPU load 4%)</Fit>
      </div>
      <div className="ml-1 h-[33px] w-0.5 border-l border-[#a0a0a0] bg-white" />
      <div className="ml-1 h-[26px] w-[3px] border-b border-r border-[#a0a0a0]" />
      <div className="ml-1.5 h-[19px] w-[156px] border-l border-t border-[#a0a0a0]" />
    </div>
  );
}

/* ---------- taskbar ---------- */
const Penguin = () => (
  <>
    <ellipse cx="15" cy="31" rx="10" ry="3" fill="#e8a01e" />
    <path d="M15 1c6 0 8 5 8 11 3 4 5 9 4 13-1 1-3-1-3-1-1 5-4 7-9 7s-8-2-9-7c0 0-2 2-3 1-1-4 1-9 4-13C7 6 9 1 15 1z" fill="#0a0a0a" />
    <ellipse cx="15" cy="23.500" rx="7.500" ry="7.500" fill="#fff" />
    <path d="M6 14c5 3 13 3 18 0l1 4c-6 4-14 4-20 0z" fill="#d8201c" /><path d="M9 18h4v6H9z" fill="#d8201c" />
    <circle cx="12.500" cy="7.500" r="2.300" fill="#fff" /><circle cx="17.500" cy="7.500" r="2.300" fill="#fff" />
    <ellipse cx="15" cy="12" rx="5" ry="1.800" fill="#e8a01e" />
  </>
);
function Office({ c, l }) {
  return (
    <S s={30} h={28} vb="0 0 30 28">
      <path d="M7 0h23v7H7z" fill={c[0]} /><path d="M7 7h23v7H7z" fill={c[1]} /><path d="M7 14h23v7H7z" fill={c[2]} /><path d="M7 21h23v7H7z" fill={c[3]} />
      <rect y="7" width="15" height="15" rx="1.500" fill={c[3]} />
      <text x="7.500" y="19" textAnchor="middle" fontSize="12.500" fontWeight="700" fill="#fff">{l}</text>
    </S>
  );
}
const task = [
  [60, <svg width="20" height="20" viewBox="0 0 20 20" fill="#fff"><path d="M0 3l8-1.200V9.500H0zM9 1.600L20 0v9.500H9zM0 10.500h8v7.700L0 17zM9 10.500h11V20L9 18.400z" /></svg>],
  [60, <S s={20}><circle cx="12.500" cy="7" r="6.200" stroke="#fff" strokeWidth="1.500" /><path d="M8 11.500L.5 19.500" stroke="#fff" strokeWidth="1.700" /></S>],
  [60, <S s={20}><circle cx="10" cy="10" r="8.200" stroke="#f4f4f4" strokeWidth="2.600" /></S>],
  [61, <S s={20}><path d="M1 1v3h13V1M1 19v-3h13v3M1.500 6h12v8h-12zM18.500 1v4M18.500 10v9" stroke="#fff" strokeWidth="1.300" /><path d="M17.500 6h2.500v3h-2.500z" fill="#fff" /></S>],
  [64, <S s={28}><path d="M1 1h7l1.500 2H19v5H1z" fill="#d99a23" /><path d="M0 4h20v14H0z" fill="#fbd567" /><path d="M4 19v-7q0-2 2-2h8q2 0 2 2v7h-3v-5H7v5z" fill="#4ba0e0" /></S>],
  [62, <S s={26}><path d="M.5 8.500C2-1 18-3 19.500 10v2.500H6.500c0 5 7 6 11.500 3V19C10 22.500 1 19 2.500 11 3.500 7.500 6 5.500 9 5 7 6 6.600 7.500 6.500 9H13c0-6-9-5-12.500-.5z" fill="#1583dc" /></S>],
  [61, <S s={30} h={31} vb="0 0 30 31"><path d="M10 8V5c0-5 10-5 10 0v3" stroke="#ddd" strokeWidth="2" /><path d="M1 8h28v22H1z" fill="#fff" /><path d="M9 13h5.500v5.500H9z" fill="#e64a2e" /><path d="M16 13h5.500v5.500H16z" fill="#7ab81e" /><path d="M9 20h5.500v5.500H9z" fill="#22a4e6" /><path d="M16 20h5.500v5.500H16z" fill="#f8b818" /></S>],
  [63, <S s={27} h={30} vb="0 0 30 34"><Penguin /></S>],
  [62, <S s={30} vb="0 0 30 30"><rect width="30" height="30" rx="6" fill="#fff" /><g strokeWidth="2.600"><circle cx="15" cy="10.500" r="4.800" stroke="#e8415a" /><circle cx="10" cy="18" r="4.800" stroke="#2a8cf0" /><circle cx="20" cy="18" r="4.800" stroke="#25a7ee" /></g><path d="M10 28h5v2h-5z" fill="#e8415a" /><path d="M15 28h5v2h-5z" fill="#2a8cf0" /></S>],
  [62, <S s={31} h={26} vb="0 0 31 26"><path d="M11 0c14 0 15 17 0 18l-4 0-4 3 1-5C-3 11 0 0 11 0z" fill="#6cc94a" /><circle cx="7" cy="6.500" r="1.700" fill="#235a18" /><circle cx="14.500" cy="6.500" r="1.700" fill="#235a18" /><path d="M22 9c11 0 11 11 6 13l0 3-3-2c-14 2-14-14-3-14z" fill="#f3f3f3" /><circle cx="18.500" cy="14.500" r="1.300" fill="#666" /><circle cx="25" cy="14.500" r="1.300" fill="#666" /></S>],
  [61, <Office c={["#33c481", "#21a366", "#107c41", "#185c37"]} l="X" />],
  [62, <Office c={["#41a5ee", "#2b7cd3", "#185abd", "#103f91"]} l="W" />],
  [62, <S s={26} h={28} vb="0 0 26 28"><rect width="26" height="28" rx="3" fill="#2a4fd0" /><path d="M3 3h19L13 25z" fill="#f4f6ff" /><L x={12.5} y={12} s={13} f="#2a4fd0">μ</L><L x={20} y={26} s={12} f="#fff">4</L></S>, 1],
  [62, <S s={26} h={29} vb="0 0 26 29"><path d="M13 0c4 3 8 3 13 3v10c0 9-6 13-13 16C6 26 0 22 0 13V3c5 0 9 0 13-3z" fill="#f5ab1c" /><path d="M13 0c4 3 8 3 13 3v10c0 9-6 13-13 16z" fill="#ff8412" /><path d="M15 5c2 7-9 8-9 14 0 3 2 6 6 8-1-4 3-5 5-9 2-3 1-9-2-13zM20 12c2 6-6 8-6 15 6-3 9-8 6-15z" fill="#fff" /></S>],
  [63, <S s={29} vb="0 0 29 29"><circle cx="14.500" cy="14.500" r="13.500" fill="#242424" stroke="#b5b5b5" strokeWidth="1.800" /><path d="M3 13C4-1 25-1 26 13 19 7 10 7 3 13z" fill="#8b8b8b" /><circle cx="14.500" cy="15" r="7.500" fill="#ee0a0a" stroke="#300" /></S>, 1],
  [62, <S s={29} vb="0 0 29 29"><path d="M1 0h15l6 6v22H1z" fill="#f0f0ee" /><path d="M2 3h2M2 7h2M2 11h2M2 15h2M2 19h2M2 23h2M7 5h9M7 9h12M7 13h9M7 17h7M7 21h7" stroke="#999" /><path d="M16 12h4q3 0 3 3v4q0 2-2 2h-4q-2 0-2 2-3-1-2-5 0-2 3-2h4v-1h-4z" fill="#3772a8" /><path d="M24 16q4 0 3.500 5 0 2-3 2h-3v1h3v2q-1 2-4 2t-4-2v-3q0-2 2-2h3q2.500 0 2.500-3z" fill="#f6cf3f" /></S>],
  [62, <S s={32} h={30} vb="0 0 32 30"><path d="M16 1l4.500 8.500L30 11l-6.500 7.500L26 28l-10-3.500L6 28l2.500-9.500L2 11l9.500-1.500z" fill="#f7d95a" stroke="#f3ce4c" strokeWidth="2" strokeLinejoin="round" /><circle cx="12" cy="14" r="1.500" fill="#7a5010" /><path d="M18 14l4-1M12 19c3 3 7 2 8-1" stroke="#9a7020" strokeWidth="1.300" /></S>, 1],
  [62, <S s={30} h={25} vb="0 0 30 25"><path d="M0 0h30v25H0z" fill="#0a0af0" /><L x={15} y={19} s={20} w={26} f="#fff" bold={false}>isis</L></S>, 1],
  [62, <S s={30} vb="0 0 30 30"><path d="M5 8l10-6q3-1 5 2l4 7q1 3-2 5l-9 6z" fill="#aebac4" stroke="#6d7b88" /><path d="M2 12l4-4 8 13-4 2z" fill="#7a8a98" /><path d="M10 10l8-5M12 13l8-5M14 16l8-5" stroke="#6f8090" strokeWidth="1.500" /><path d="M20 16l3 7M22 21l5 8M24 20l-4 6" stroke="#b8c4d0" strokeWidth="2.400" /></S>, 1],
  [62, <S s={28} h={22} vb="0 0 28 22"><path d="M0 0h28v22H0z" fill="#f4f4f4" /><path d="M0 0h28v3H0z" fill="#8e9aa4" /><path d="M8 4h11v15H8z" fill="#1b77d2" /><path d="M2 7h4M2 10h4M2 13h4M21 6h5M21 9h5M21 12h5M21 15h5" stroke="#777" /></S>, 2],
];
function Taskbar() {
  return (
    <div className="flex h-[50px] shrink-0 bg-[linear-gradient(90deg,#47342c_0%,#3f3538_6%,#3c3343_13%,#3c3344_28%,#463b41_37%,#40303a_45%,#3a2e3c_54%,#54284a_62%,#2e2a3c_66%,#413a42_71%,#2c2b3b_78%,#222635_86%,#1f2533_100%)] text-white">
      {task.map(([w, ic, st], i) => (
        <div key={i} className={"flex shrink-0 flex-col items-center" + (st === 2 ? " bg-[#695a72]" : "")} style={{ width: w }}>
          <div className="flex h-[47px] items-center pt-0.5">{ic}</div>
          {(st === 1 || st === 2) && <div className={"h-[3px] bg-[#7fb2e0] " + (st === 2 ? "w-full" : "w-[51px]")} />}
        </div>
      ))}
      <div className="flex-1" />
      <div className="flex items-center">
        <svg width="156" height="50" viewBox="1535 1030 156 50" fill="none" stroke="#f2f2f2" strokeWidth="1.500">
          <path d="M1545.500 1059l7.500-8 7.500 8" />
          <path d="M1610 1050h11.500v10.500H1607v-6" fill="none" /><path d="M1609 1052h11v7h-11z" fill="#fff" stroke="none" /><path d="M1604 1049v3q0 3 2.500 3t2.500-3v-3zM1605.500 1046v3M1608 1046v3M1623 1053v5" />
          <path d="M1636 1062c0-8 6-13.500 14-13.500M1640 1062c0-6 4-10 10.500-10M1644 1062c0-3.500 2.500-6.500 7-6.500" strokeWidth="1.300" /><circle cx="1649.500" cy="1061" r="1.800" fill="#fff" stroke="none" />
          <path d="M1663.500 1052h3l4-4v14l-4-4h-3z" strokeWidth="1.300" /><path d="M1673.500 1052q2.500 3 0 6M1677 1050q4 5 0 10" strokeWidth="1.200" /><path d="M1680 1047q5 8 0 16" stroke="#7d818c" strokeWidth="1.200" />
          <g transform="translate(1574 1046) scale(.6)" stroke="none"><Penguin /></g><circle cx="1587" cy="1059" r="5.500" fill="#f05050" stroke="#ffdede" /><path d="M1583.500 1056l7 6" />
        </svg>
        <Fit w={20} className="text-[20px] leading-[50px]">英</Fit>
        <div className="ml-[18px] h-[19px] w-[19px] bg-white text-center text-[16px] leading-[18px] text-black">拼</div>
        <div className="ml-[26px] flex flex-col items-center text-[16px] leading-6">
          <Fit w={40} dy={0}>20:19</Fit>
          <Fit w={66} dy={0}>2020/4/2</Fit>
        </div>
        <S s={22} vb="0 0 22 22" className="ml-[28px]"><path d="M1 2h20v15h-7l-3.500 3.500L7 17H1z" stroke="#fff" strokeWidth="1.400" /></S>
        <div className="ml-6 mr-[5px] h-[50px] w-px bg-[#555b66]" />
      </div>
    </div>
  );
}

const menus = [
  ["文件(F)", 48, 8], ["查看(V)", 50, 17], ["编辑(E)", 49, 18], ["工具(T)", 48, 18], ["设计(D)", 51, 18], ["绘图(G)", 52, 17],
  ["源代码(S)", 64, 17], ["调试(B)", 50, 17], ["库(L)", 32, 18], ["模板(M)", 55, 17], ["系统(Y)", 48, 19], ["帮助(H)", 51, 18],
];

export default function App() {
  return (
    <div className="relative flex h-[1080px] w-[1920px] flex-col overflow-hidden bg-[#ededee] text-black [font-family:'Open_Sans','Noto_Sans_CJK_SC',sans-serif]">
      <div className="flex h-[29px] shrink-0 items-center bg-[#fdfdfd] pl-[2px] text-[16px] leading-none text-[#777]">
        <S s={20} h={16} vb="0 0 20 16"><path d="M0 0h20v16H0z" fill="#1212c4" /><L x={10} y={13} s={15} w={17} f="#fff">isis</L></S>
        <Fit w={275} dy={0} className="ml-[5px]">串口通信 - ISIS Professional (仿真中......)</Fit>
        <div className="flex-1" />
        <svg width="160" height="29" viewBox="1760 0 160 29" fill="none" stroke="#777" strokeWidth="1.200">
          <path d="M1765 13.500h12M1823.500 10.500h9v9h-9zM1826 10V8.500h9v9h-2M1882 8l12 12M1894 8l-12 12" />
        </svg>
      </div>
      <div className="flex h-[25px] shrink-0 items-center border-t border-[#dcdcdc] bg-[#fdfdfd] text-[15px] leading-[24px] text-[#707070]">
        {menus.map(([t, w, g]) => <span key={t} className="flex" style={{ marginLeft: g }}><Fit w={w}>{t}</Fit></span>)}
      </div>
      <Toolbar />
      <div className="flex h-[904px] shrink-0 pt-px">
        <ModeBar />
        <SidePanel />
        <div className="ml-[5px] h-[903px] w-[1721px] shrink-0 overflow-hidden border-2 border-[#77776f] bg-[#dedfcf]"><Schematic /></div>
      </div>
      <StatusBar />
      <Taskbar />
      <div className="absolute left-[1422px] top-0 h-[3px] w-[346px] bg-[#d0d0d0] shadow-[0_0_3px_#ccc]" />
      <SerialWindow />
      <Recorder />
    </div>
  );
}
